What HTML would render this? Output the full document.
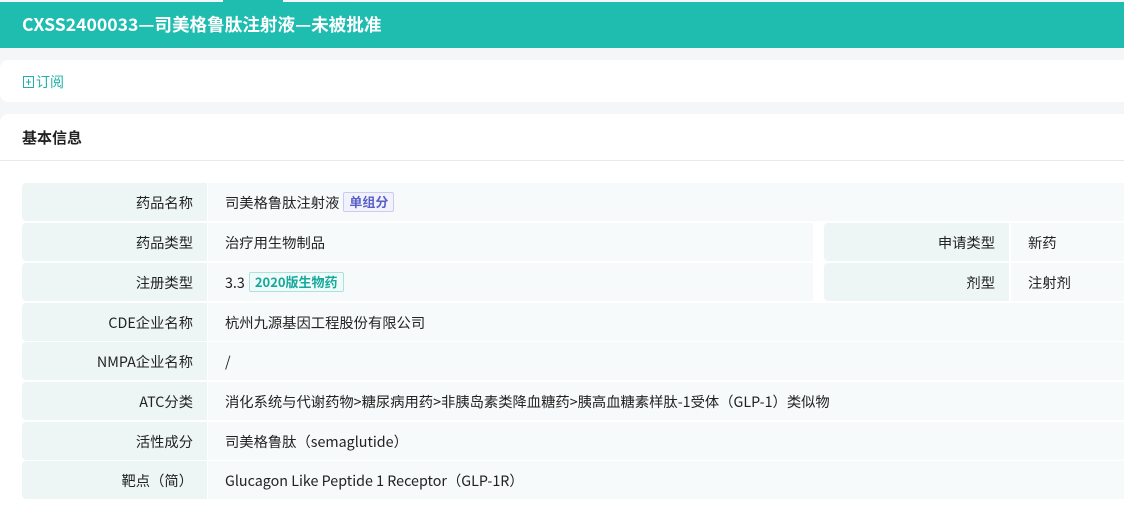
<!DOCTYPE html>
<html><head><meta charset="utf-8"><style>
*{margin:0;padding:0;box-sizing:border-box}
body{width:1124px;height:510px;overflow:hidden;background:#f5f6f8;font-family:"Liberation Sans","Noto Sans CJK SC",sans-serif;color:#222;font-size:14px;position:relative}
.hdr{position:absolute;left:0;top:2px;width:1124px;height:46px;background:#1fbcb0;color:#fff;font-weight:bold;font-size:17.6px;line-height:46px;padding-left:22px;font-family:"Noto Sans CJK SC",sans-serif}
.tab{position:absolute;left:223px;top:0;width:60px;height:2px;background:#1fbcb0}
.c1{position:absolute;left:0;top:60px;width:1124px;height:42px;background:#fff;border-radius:8px 0 0 8px;color:#1fb1a5;line-height:44px;padding-left:22px;font-size:14px;font-family:"Noto Sans CJK SC",sans-serif}
.c1 svg{vertical-align:-2px;margin-right:1px}
.c2{position:absolute;left:0;top:114px;width:1124px;height:396px;background:#fff;border-radius:8px 0 0 0}
.t{position:absolute;left:22px;top:14px;font-weight:bold;font-size:15px;line-height:20px;font-family:"Noto Sans CJK SC",sans-serif}
.hr{position:absolute;left:0;top:46px;width:1124px;height:1px;background:#e8e8e8}
.row{position:absolute;left:22px;width:1102px;height:38px;font-family:"Noto Sans CJK SC",sans-serif;line-height:40px;font-size:14.3px}
.lb{position:absolute;left:0;top:0;width:185px;height:38px;background:#eef5f5;border-radius:4px 0 0 4px;text-align:right;padding-right:14px}
.vl{position:absolute;left:186px;top:0;right:0;height:38px;background:#f7fafa;padding-left:17px}
.tag{display:inline-block;font-size:13px;line-height:18px;padding:0 5px;border:1px solid;border-radius:2px;margin-left:4px;vertical-align:1px;font-weight:bold}
</style></head><body>
<div class="tab"></div>
<div class="hdr">CXSS2400033—司美格鲁肽注射液—未被批准</div>
<div class="c1"><svg width="13" height="14" viewBox="0 0 13 14"><rect x="1.5" y="1.5" width="10" height="11" fill="none" stroke="#1fb1a5" stroke-width="1"/><path d="M6.5 4v6M4 7h5" stroke="#1fb1a5" stroke-width="1"/></svg>订阅</div>
<div class="c2">
<div class="t">基本信息</div><div class="hr"></div>
</div>
<div class="row" style="top:183px"><div class="lb">药品名称</div><div class="vl">司美格鲁肽注射液<span class="tag" style="color:#5a5fc8;border-color:#c9cbf0;background:#f2f2fc">单组分</span></div></div>
<div class="row" style="top:223px"><div class="lb">药品类型</div><div class="vl" style="right:311px">治疗用生物制品</div>
<div class="lb" style="left:802px;border-radius:4px 0 0 4px">申请类型</div><div class="vl" style="left:989px">新药</div></div>
<div class="row" style="top:263px"><div class="lb">注册类型</div><div class="vl" style="right:311px">3.3<span class="tag" style="color:#16a89c;border-color:#a8e3de;background:#effaf9">2020版生物药</span></div>
<div class="lb" style="left:802px">剂型</div><div class="vl" style="left:989px">注射剂</div></div>
<div class="row" style="top:303px"><div class="lb">CDE企业名称</div><div class="vl">杭州九源基因工程股份有限公司</div></div>
<div class="row" style="top:342px"><div class="lb">NMPA企业名称</div><div class="vl">/</div></div>
<div class="row" style="top:382px"><div class="lb">ATC分类</div><div class="vl">消化系统与代谢药物&gt;糖尿病用药&gt;非胰岛素类降血糖药&gt;胰高血糖素样肽-1受体（GLP-1）类似物</div></div>
<div class="row" style="top:422px"><div class="lb">活性成分</div><div class="vl">司美格鲁肽（semaglutide）</div></div>
<div class="row" style="top:461px"><div class="lb">靶点（简）</div><div class="vl">Glucagon Like Peptide 1 Receptor（GLP-1R）</div></div>
</body></html>
